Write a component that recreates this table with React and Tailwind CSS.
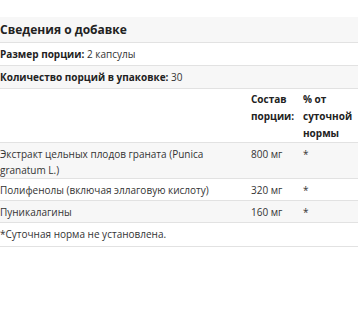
export default function App() {
  const font = { fontFamily: '"Open Sans", "Noto Sans", sans-serif' };
  const row = "grid grid-cols-[251px_52px_1fr] border-b border-[#e2e2e2] text-[10px] leading-[16px]";
  return (
    <div className="w-[358px] h-[316px] bg-white pt-[17px] text-[#333]" style={font}>
      <div className="bg-[#f7f7f7] border-b border-[#e2e2e2] h-[26px] flex items-center">
        <span className="text-[12px] font-bold text-[#222]">Сведения о добавке</span>
      </div>
      <div className="border-b border-[#e2e2e2] h-[23px] flex items-center text-[10px]">
        <span className="font-bold text-[#222]">Размер порции:</span>&nbsp;2 капсулы
      </div>
      <div className="bg-[#f7f7f7] border-b border-[#e2e2e2] h-[23px] flex items-center text-[10px]">
        <span className="font-bold text-[#222]">Количество порций в упаковке:</span>&nbsp;30
      </div>
      <div className={`${row} leading-[17px] pt-[2px] font-bold text-[#222]`}>
        <div></div>
        <div>Состав порции:</div>
        <div>% от суточной нормы</div>
      </div>
      <div className={`${row} bg-[#f7f7f7] pt-[3px]`}>
        <div className="pr-2">Экстракт цельных плодов граната (Punica granatum L.)</div>
        <div>800 мг</div>
        <div>*</div>
      </div>
      <div className={`${row} h-[22px] items-center`}>
        <div>Полифенолы (включая эллаговую кислоту)</div>
        <div>320 мг</div>
        <div>*</div>
      </div>
      <div className={`${row} bg-[#f7f7f7] h-[22px] items-center`}>
        <div>Пуникалагины</div>
        <div>160 мг</div>
        <div>*</div>
      </div>
      <div className="border-b border-[#e2e2e2] h-[24px] flex items-center text-[10px]">
        *Суточная норма не установлена.
      </div>
    </div>
  );
}
